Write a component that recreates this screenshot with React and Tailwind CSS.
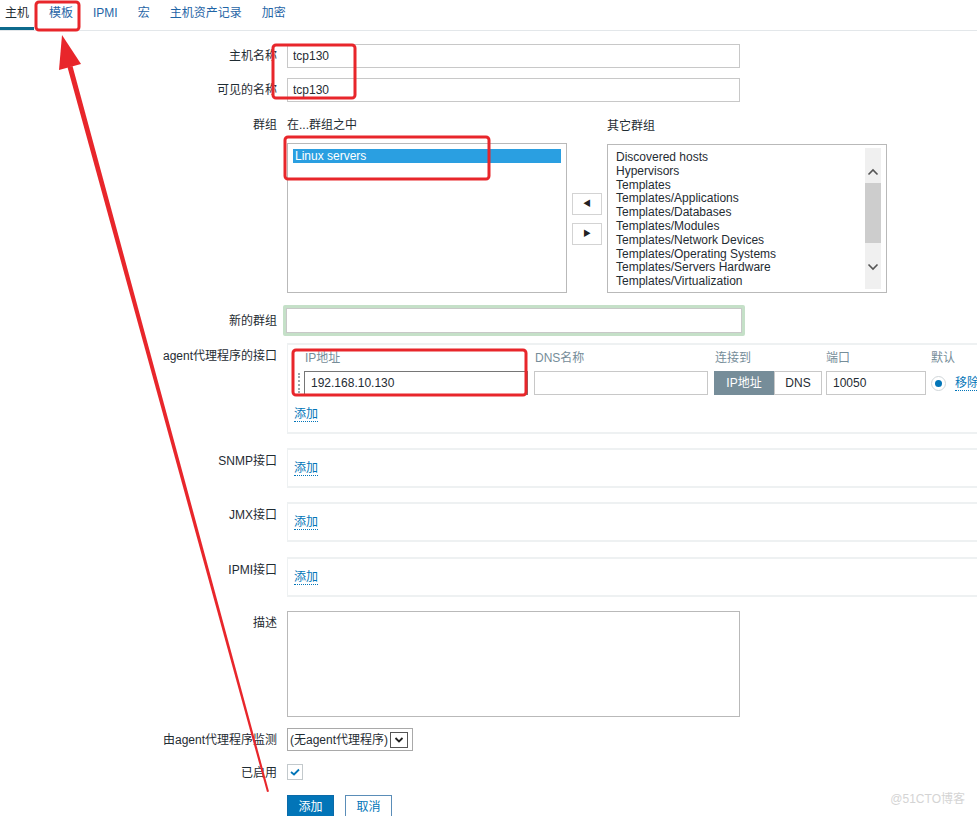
import React from "react";

const FONT = { fontFamily: '"Liberation Sans", Arial, "Noto Sans CJK SC", sans-serif' };

const otherGroups = [
  "Discovered hosts",
  "Hypervisors",
  "Templates",
  "Templates/Applications",
  "Templates/Databases",
  "Templates/Modules",
  "Templates/Network Devices",
  "Templates/Operating Systems",
  "Templates/Servers Hardware",
  "Templates/Virtualization",
];

const tabs = ["主机", "模板", "IPMI", "宏", "主机资产记录", "加密"];

// Row: label column right-aligned, content from x=287
const Row = ({ label, children, className = "", labelClass = "" }) => (
  <div className={`flex ${className}`}>
    <div className={`w-[277px] shrink-0 text-right text-[12px] text-[#1f2c33] ${labelClass}`}>{label}</div>
    <div className="ml-[10px] flex-1 min-w-0">{children}</div>
  </div>
);

const AddLink = () => (
  <span className="text-[12px] text-[#0275b8] border-b border-dotted border-[#0275b8]">添加</span>
);

const Panel = ({ label, className = "mt-[14px]" }) => (
  <Row label={label} labelClass="pt-[6px]" className={className}>
    <div className="h-[40px] border-y-2 border-l border-[#eef1f2] flex items-center pl-[6px]">
      <AddLink />
    </div>
  </Row>
);

const Annotations = () => (
  <svg className="absolute left-0 top-0 pointer-events-none" width="977" height="816">
    <g fill="none" stroke="#e8262b" strokeWidth="3">
      <rect x="36" y="2" width="43" height="28" rx="3" />
      <rect x="273" y="45" width="82" height="53" rx="3" />
      <rect x="285" y="137" width="204" height="42" rx="3" />
      <rect x="293" y="350" width="233" height="45" rx="3" />
    </g>
    <polygon points="72.5,66 67.5,67.3 267,792 269,791.5" fill="#e8262b" />
    <polygon points="62,35 81,64 59,70" fill="#e8262b" />
  </svg>
);

export default function App() {
  return (
    <div className="relative w-[977px] h-[816px] overflow-hidden bg-white leading-[14px]" style={FONT}>
      {/* tabs */}
      <div className="flex h-[31px] border-b border-[#e3e7ea] text-[12px]">
        {tabs.map((t, i) => (
          <div
            key={t}
            className={`px-[5px] pt-[6px] ${i === 0 ? "text-[#1f2c33] border-b-[3px] border-[#0d6a8c]" : "text-[#1f65a6] ml-[10px]"}`}
          >
            {t}
          </div>
        ))}
      </div>

      <div className="pt-[13px]">
        <Row label="主机名称" labelClass="pt-[5px]">
          <input readOnly value="tcp130" className="block w-[453px] h-[24px] border border-[#c8c8c8] px-[5px] text-[12px] text-[#1f2c33] outline-none" />
        </Row>
        <Row label="可见的名称" labelClass="pt-[5px]" className="mt-[10px]">
          <input readOnly value="tcp130" className="block w-[453px] h-[24px] border border-[#c8c8c8] px-[5px] text-[12px] text-[#1f2c33] outline-none" />
        </Row>

        {/* groups */}
        <Row label="群组" labelClass="pt-[6px]" className="mt-[10px]">
          <div className="flex">
            <div className="shrink-0">
              <div className="text-[12px] text-[#1f2c33] pt-[6px] h-[31px]">在...群组之中</div>
              <div className="w-[280px] h-[150px] border border-[#b9b9b9] p-[5px]">
                <div className="bg-[#2a9fe1] text-white text-[12px] leading-[14px] pl-[2px]">Linux servers</div>
              </div>
            </div>
            <div className="flex flex-col gap-[8px] ml-[5px] mt-[81px] shrink-0">
              <div className="w-[30px] h-[22px] border border-[#d3d3d3] flex items-center justify-center text-[8px] text-[#222]">◀</div>
              <div className="w-[30px] h-[22px] border border-[#d3d3d3] flex items-center justify-center text-[8px] text-[#222]">▶</div>
            </div>
            <div className="ml-[5px] shrink-0">
              <div className="text-[12px] text-[#1f2c33] pt-[7px] h-[32px]">其它群组</div>
              <div className="w-[280px] h-[149px] border border-[#b9b9b9] flex py-[3px]">
                <div className="flex-1 pl-[8px] pt-[3px] text-[12px] leading-[13.8px] text-[#1f2c33]">
                  {otherGroups.map((g) => (
                    <div key={g}>{g}</div>
                  ))}
                </div>
                <div className="w-[16px] mr-[5px] bg-[#f0f0f0] flex flex-col items-center">
                  <svg width="12" height="10" viewBox="0 0 12 10" className="mt-[19px]">
                    <path d="M1.5 7.5 L6 3 L10.5 7.5" fill="none" stroke="#555" strokeWidth="1.6" />
                  </svg>
                  <div className="w-full h-[60px] bg-[#cdcdcd] mt-[6px]" />
                  <svg width="12" height="10" viewBox="0 0 12 10" className="mt-[19px]">
                    <path d="M1.5 2.5 L6 7 L10.5 2.5" fill="none" stroke="#555" strokeWidth="1.6" />
                  </svg>
                </div>
              </div>
            </div>
          </div>
        </Row>

        {/* new group */}
        <Row label="新的群组" labelClass="pt-[9px]" className="mt-[12px]">
          <div className="ml-[-4px] w-[462px] border-[3px] border-[#c5e0c8] rounded-[2px]">
            <div className="h-[25px] border border-[#c8c8c8] bg-white" />
          </div>
        </Row>

        {/* agent interface */}
        <Row label="agent代理程序的接口" labelClass="pt-[6px]" className="mt-[7px]">
          <div className="border-y-2 border-l border-[#eef1f2] pl-[10px] h-[91px]">
            <div className="flex text-[12px] text-[#768d99] pt-[6px] h-[21px] whitespace-nowrap">
              <div className="w-[237px] pl-[7px] shrink-0">IP地址</div>
              <div className="w-[180px] shrink-0">DNS名称</div>
              <div className="w-[111px] shrink-0">连接到</div>
              <div className="w-[105px] shrink-0">端口</div>
              <div className="shrink-0">默认</div>
            </div>
            <div className="flex items-center mt-[5px] whitespace-nowrap">
              <div className="w-[6px] h-[20px] border-l-2 border-dotted border-[#9aa7ae] shrink-0" />
              <input readOnly value="192.168.10.130" className="block shrink-0 w-[224px] h-[24px] border border-[#767676] px-[6px] text-[12px] text-[#1f2c33] outline-none" />
              <input readOnly value="" className="block shrink-0 ml-[6px] w-[174px] h-[24px] border border-[#c8c8c8] outline-none" />
              <div className="ml-[6px] flex h-[24px] text-[12px] shrink-0">
                <div className="w-[60px] bg-[#768d99] text-white flex items-center justify-center">IP地址</div>
                <div className="w-[48px] border border-[#c8c8c8] text-[#1f2c33] flex items-center justify-center">DNS</div>
              </div>
              <input readOnly value="10050" className="block shrink-0 ml-[4px] w-[100px] h-[24px] border border-[#c8c8c8] px-[6px] text-[12px] text-[#1f2c33] outline-none" />
              <div className="ml-[5px] w-[15px] h-[15px] rounded-full border border-[#d0d6d9] flex items-center justify-center shrink-0">
                <div className="w-[7px] h-[7px] rounded-full bg-[#0275b8]" />
              </div>
              <span className="ml-[9px] shrink-0 text-[12px] text-[#0275b8] border-b border-dotted border-[#0275b8]">移除</span>
            </div>
            <div className="mt-[11px] -ml-[4px]">
              <AddLink />
            </div>
          </div>
        </Row>

        <Panel label="SNMP接口" />
        <Panel label="JMX接口" />
        <Panel label="IPMI接口" className="mt-[15px]" />

        {/* description */}
        <Row label="描述" labelClass="pt-[5px]" className="mt-[14px]">
          <div className="w-[453px] h-[106px] border border-[#b9b9b9]" />
        </Row>

        <Row label="由agent代理程序监测" labelClass="pt-[5px]" className="mt-[11px]">
          <div className="w-[126px] h-[23px] border border-[#a9a9a9] flex items-center pl-[2px] text-[12px] text-[#1f2c33] whitespace-nowrap">
            <span>(无agent代理程序)</span>
            <div className="ml-[2px] w-[18px] h-[16px] border border-[#555] flex items-center justify-center shrink-0">
              <svg width="10" height="8" viewBox="0 0 10 8">
                <path d="M1.5 2 L5 5.5 L8.5 2" fill="none" stroke="#222" strokeWidth="1.8" />
              </svg>
            </div>
          </div>
        </Row>

        <Row label="已启用" labelClass="pt-[2px]" className="mt-[13px]">
          <div className="w-[16px] h-[16px] border border-[#c3c9cc] flex items-center justify-center">
            <svg width="10" height="8" viewBox="0 0 10 8">
              <path d="M1 4 L4 6.5 L9 1.5" fill="none" stroke="#0275b8" strokeWidth="1.8" />
            </svg>
          </div>
        </Row>

        <Row label="" className="mt-[15px]">
          <div className="flex gap-[11px] text-[12px]">
            <div className="w-[47px] h-[24px] bg-[#0275b8] text-white flex items-center justify-center border border-[#0b6aa8]">添加</div>
            <div className="w-[47px] h-[24px] bg-white text-[#0275b8] flex items-center justify-center border border-[#5a8db8]">取消</div>
          </div>
        </Row>
      </div>

      <div className="absolute right-[12px] top-[792px] text-[12px] text-[#d4d4d4]">@51CTO博客</div>

      <Annotations />
    </div>
  );
}
